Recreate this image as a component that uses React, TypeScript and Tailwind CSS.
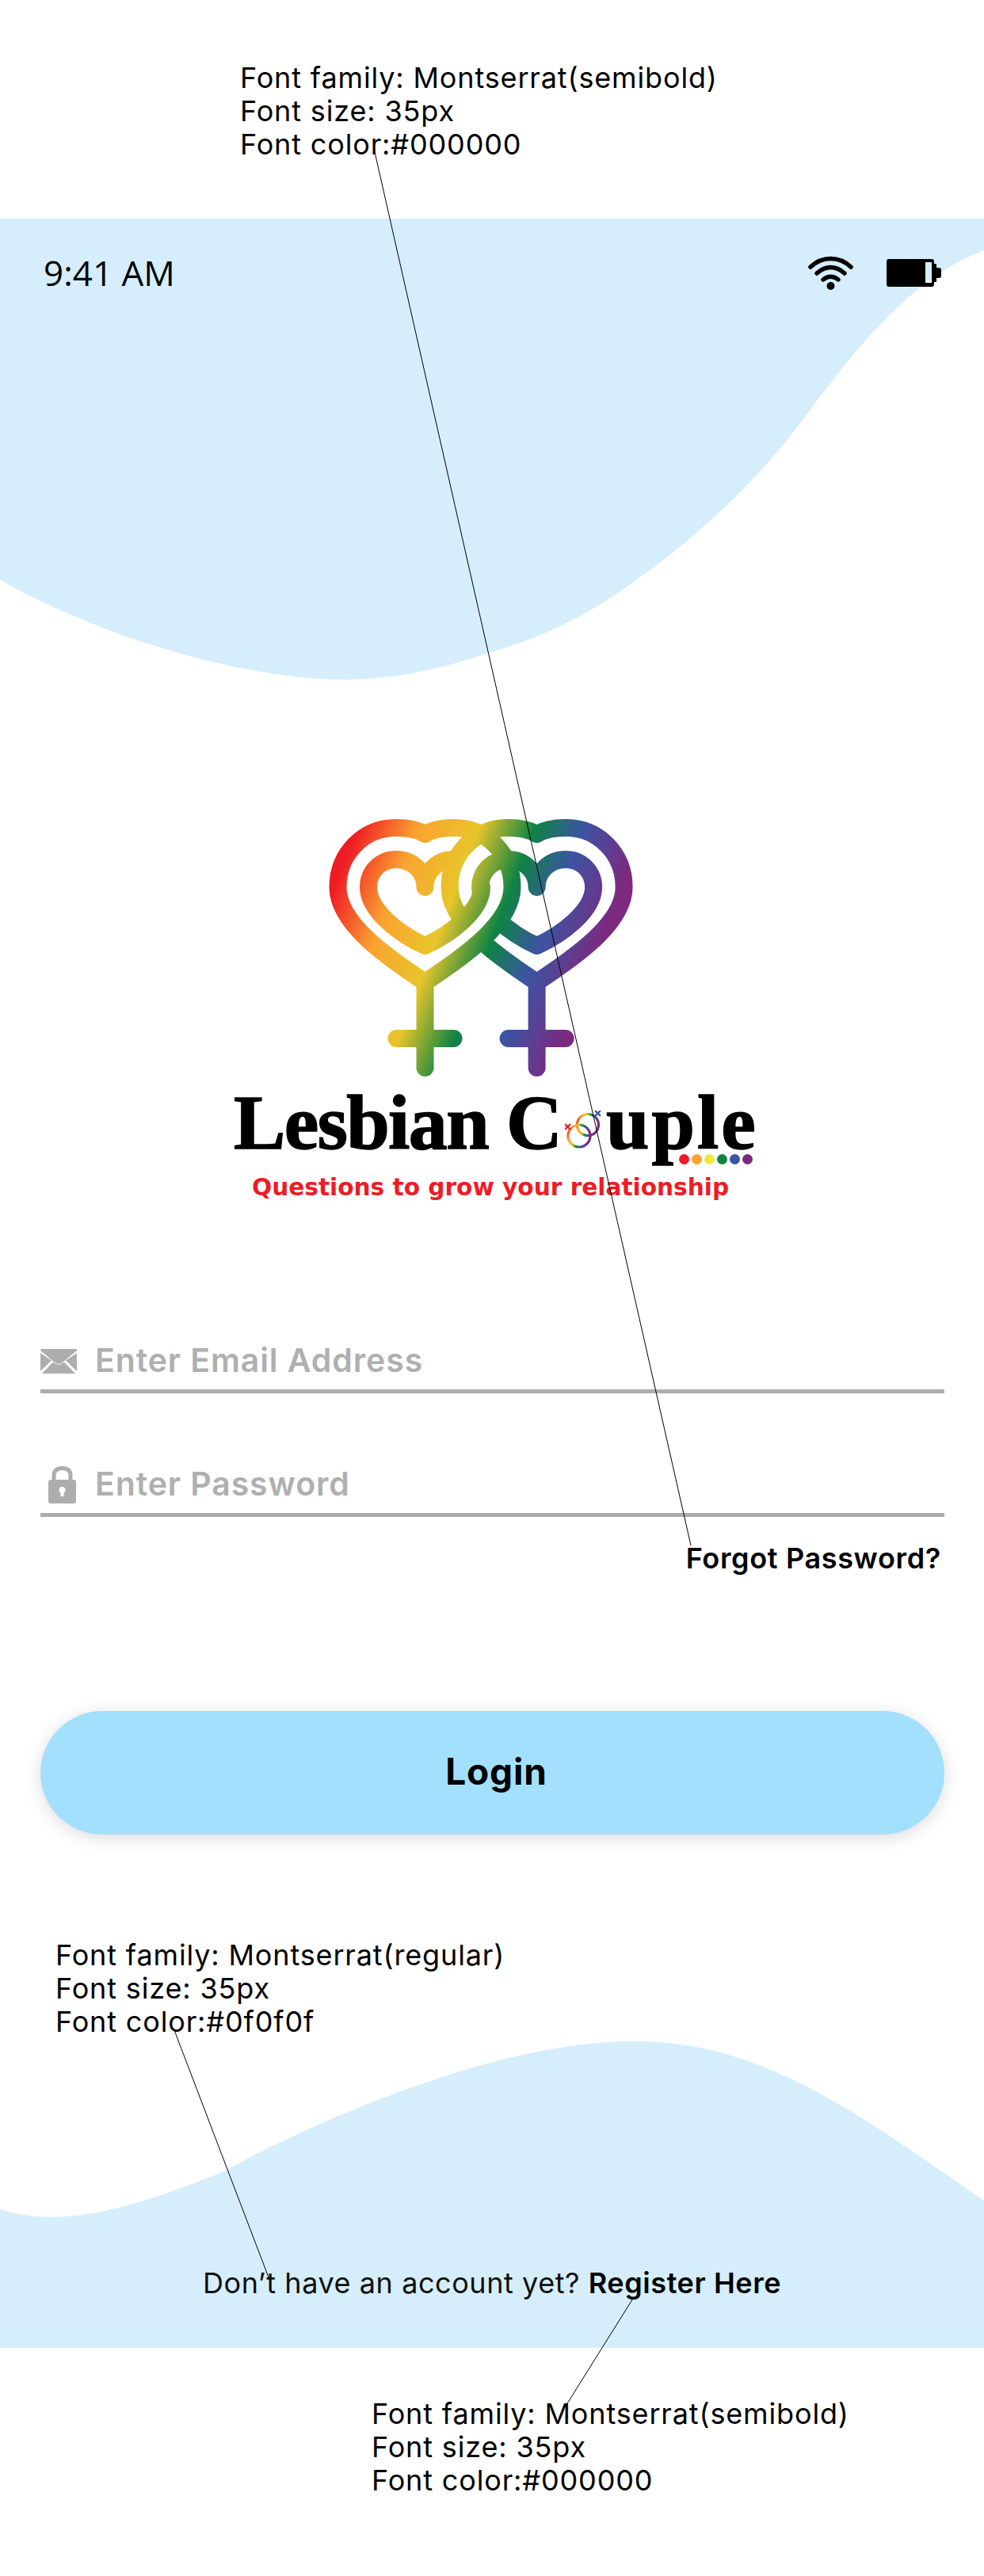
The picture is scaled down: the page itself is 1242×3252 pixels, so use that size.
import React from "react";

const note = "font-['Inter',sans-serif] text-[36px] leading-[42px] tracking-[0.85px]";
const stops: [string, string][] = [
  ["0", "#ee1c25"],
  ["0.21", "#faa330"],
  ["0.42", "#e8c52a"],
  ["0.61", "#0f8443"],
  ["0.78", "#3b54a3"],
  ["1", "#7f287f"],
];

const Note: React.FC<{ lines: string[]; className?: string }> = ({ lines, className }) => (
  <div className={`${note} text-black ${className ?? ""}`}>
    {lines.map((l) => (
      <div key={l}>{l}</div>
    ))}
  </div>
);

const outerHeart = (c: number) =>
  `M${c} 53C${c - 10} 47 ${c - 22} 45 ${c - 36.5} 45C${c - 78} 45 ${c - 110} 78 ${c - 110} 120C${c - 110} 165 ${c - 50} 207 ${c} 240C${c + 50} 207 ${c + 110} 165 ${c + 110} 120C${c + 110} 78 ${c + 78} 45 ${c + 36.5} 45C${c + 22} 45 ${c + 10} 47 ${c} 53`;

const HeartsLogo = () => {
  const L = 266.5;
  const R = 407.6;
  const props = { fill: "none", stroke: "url(#rainbow)", strokeWidth: 22, strokeLinecap: "round" as const, strokeLinejoin: "round" as const };
  return (
    <svg width="700" height="380" viewBox="0 0 700 380" className="block">
      <defs>
        <linearGradient id="rainbow" gradientUnits="userSpaceOnUse" x1="197" y1="0" x2="518.6" y2="122">
          {stops.map(([o, c]) => (
            <stop key={o} offset={o} stopColor={c} />
          ))}
        </linearGradient>
      </defs>
      {/* right heart goes underneath */}
      <path {...props} d={outerHeart(R)} strokeLinejoin="miter" />
      <path
        {...props}
        d={`M${R} 120C${R} 100 ${R - 16} 85 ${R - 36.5} 85C${R - 56} 85 ${R - 71.5} 100 ${R - 71.5} 120C${R - 71.5} 150 ${R - 31} 180 ${R} 194C${R + 31} 180 ${R + 71.5} 150 ${R + 71.5} 120C${R + 71.5} 100 ${R + 56} 85 ${R + 36.5} 85C${R + 16} 85 ${R} 100 ${R} 120`}
      />
      {/* gap between the two left strokes hides the right heart */}
      <path d={`M${L + 91} 122C${L + 91} 160 ${L + 40} 195 ${L} 217`} fill="none" stroke="#fff" strokeWidth="19" />
      <path {...props} d={outerHeart(L)} strokeLinejoin="miter" />
      <path
        {...props}
        d={`M${L + 36} 85C${L + 16} 85 ${L} 100 ${L} 120C${L} 100 ${L - 16} 85 ${L - 36.5} 85C${L - 56} 85 ${L - 71.5} 100 ${L - 71.5} 120C${L - 71.5} 150 ${L - 31} 180 ${L} 194C${L + 31} 180 ${L + 71.5} 150 ${L + 71.5} 120`}
      />
      <path d={`M${L} 240V348M${L - 36} 311H${L + 36}`} {...props} />
      <path d={`M${R} 240V348M${R - 36} 311H${R + 36}`} {...props} />
    </svg>
  );
};

const RingsO = () => (
  <svg width="47" height="48" viewBox="0 0 47 48" className="inline-block align-baseline mx-[5px]">
    <defs>
      <linearGradient id="ringsGrad" x1="0" y1="0" x2="1" y2="0.3">
        {stops.map(([o, c]) => (
          <stop key={o} offset={o} stopColor={c} />
        ))}
      </linearGradient>
    </defs>
    <g fill="none" stroke="url(#ringsGrad)" strokeWidth="3.2">
      <circle cx="29" cy="18" r="13.5" />
      <circle cx="18" cy="32" r="14" />
    </g>
    <path d="M0 17l7 7M7 17l-7 7" stroke="#ee1c25" strokeWidth="2.4" />
    <path d="M38 0l7 7M45 0l-7 7" stroke="#3b54a3" strokeWidth="2.4" />
  </svg>
);

export default function App() {
  return (
    <div className="relative w-[1242px] h-[3252px] bg-white overflow-hidden flex flex-col">
      <div className="h-[276px] pt-[77px] pl-[303px]">
        <Note lines={["Font family: Montserrat(semibold)", "Font size: 35px", "Font color:#000000"]} />
      </div>

      <div className="relative h-[2688px] shrink-0">
        {/* background waves */}
        <svg className="absolute left-0 top-0" width="1242" height="600" viewBox="0 0 1242 600">
          <path
            d="M0 0H1242V40C1160 70 1090 150 1020 245C950 340 870 410 792 464C737 504 680 530 618 548C558 568 500 582 436 582C310 582 130 530 0 456Z"
            fill="#d6eefb"
          />
        </svg>
        <svg className="absolute left-0 top-[2300px]" width="1242" height="388" viewBox="0 0 1242 388">
          <path
            d="M0 213C70 235 150 220 285 164C420 90 640 0 800 1C960 0 1080 90 1242 202V388H0Z"
            fill="#d6eefb"
          />
        </svg>

        <div className="relative flex flex-col">
          <div className="h-[136px] pl-[55px] pr-[54px] flex items-center justify-between">
            <span className="font-['Open_Sans',sans-serif] text-[44px] text-black">9:41 AM</span>
            <div className="flex items-center gap-[42px]">
              <svg width="57" height="43" viewBox="0 0 57 43">
                <g fill="none" stroke="#000" strokeWidth="5.5" strokeLinecap="round">
                  <path d="M3 14C18 0 39 0 54 14" />
                  <path d="M11 22C22 12 35 12 46 22" />
                  <path d="M19 30C25 25 32 25 38 30" />
                </g>
                <circle cx="28.5" cy="38" r="5" fill="#000" />
              </svg>
              <svg width="69" height="35" viewBox="0 0 69 35">
                <path
                  fill="#000"
                  fillRule="evenodd"
                  d="M3 0H57Q60 0 60 3V6H63V11H66Q69 11 69 14V21Q69 24 66 24H63V29H60V32Q60 35 57 35H3Q0 35 0 32V3Q0 0 3 0ZM49 4V30H57V4Z"
                />
              </svg>
            </div>
          </div>

          <div className="mt-[588px] ml-[270px]">
            <HeartsLogo />
          </div>
          <div className="relative ml-[295px] w-fit h-[86px] mt-[-6px] font-['Liberation_Serif',serif] font-bold text-[98px] leading-[86px] text-black whitespace-nowrap [-webkit-text-stroke:1.5px_#000]">
            <span className="tracking-[-1.6px]">Lesbian C</span>
            <RingsO />
            <span className="tracking-[3px]">uple</span>
            <div className="absolute left-[562px] top-[83px] flex gap-[3px]">
              {["bg-[#ee1c25]", "bg-[#faa330]", "bg-[#f2e73a]", "bg-[#0f8443]", "bg-[#3b54a3]", "bg-[#7f287f]"].map((c) => (
                <span key={c} className={`w-[13px] h-[13px] rounded-full ${c}`} />
              ))}
            </div>
          </div>
          <div className="mt-[20px] ml-[318px] font-['DejaVu_Sans',sans-serif] font-bold text-[29.6px] leading-[38px] text-[#ee1c25] whitespace-nowrap">
            Questions to grow your relationship
          </div>

          <div className="mt-[164px] mx-[51px] w-[1141px] h-[77px] border-b-[5px] border-[#aeadae] flex items-center font-['Inter',sans-serif] font-semibold text-[41px] tracking-[0.9px] text-[#b0afb0]">
            <svg width="46" height="31" viewBox="0 0 46 31" className="mr-[23px]">
              <path fill="#aeadae" d="M0 2L18 17Q23 21 28 17L46 2V0H1ZM0 5V28L14 14.5ZM46 5V28L32 14.5ZM2 31H44L30 16.5Q23 23 16 16.5Z" />
            </svg>
            Enter Email Address
          </div>
          <div className="mt-[79px] mx-[51px] w-[1141px] h-[77px] border-b-[5px] border-[#aeadae] flex items-center font-['Inter',sans-serif] font-semibold text-[41px] tracking-[0.9px] text-[#b0afb0]">
            <svg width="35" height="47" viewBox="0 0 35 47" className="ml-[10px] mr-[24px]">
              <path fill="none" stroke="#aeadae" strokeWidth="5" d="M7 20V12C7 5.5 11 2.5 17.5 2.5S28 5.5 28 12V20" />
              <path
                fill="#aeadae"
                fillRule="evenodd"
                d="M3 17H32Q35 17 35 20V44Q35 47 32 47H3Q0 47 0 44V20Q0 17 3 17ZM17.5 26A4 4 0 0 0 15.5 33.5V38H19.5V33.5A4 4 0 0 0 17.5 26Z"
              />
            </svg>
            Enter Password
          </div>
          <div className="mt-[30px] mr-[54px] text-right font-['Inter',sans-serif] font-semibold text-[36px] tracking-[0.65px] leading-[44px] text-black">
            Forgot Password?
          </div>

          <button className="mt-[171px] mx-[51px] w-[1141px] h-[156px] pl-[10px] pb-[4px] rounded-[78px] bg-[#a3e0fe] shadow-[0_4px_22px_rgba(0,0,0,0.14)] font-['Inter',sans-serif] font-bold text-[46px] tracking-[0.8px] text-black">
            Login
          </button>

          <Note className="mt-[131px] ml-[70px]" lines={["Font family: Montserrat(regular)", "Font size: 35px", "Font color:#0f0f0f"]} />

          <div className="mt-[288px] ml-[256px] font-['Inter',sans-serif] text-[36px] tracking-[0.57px] leading-[42px] text-[#0f0f0f] whitespace-nowrap">
            Don’t have an account yet? <span className="font-semibold text-black">Register Here</span>
          </div>
        </div>
      </div>

      <div className="pt-[62px] pl-[469px]">
        <Note lines={["Font family: Montserrat(semibold)", "Font size: 35px", "Font color:#000000"]} />
      </div>

      {/* annotation leader lines */}
      <svg className="absolute left-0 top-0 pointer-events-none" width="1242" height="3252" viewBox="0 0 1242 3252">
        <g stroke="#000" strokeWidth="1" fill="none">
          <path d="M473 192L872 1951" />
          <path d="M220 2563L339 2875" />
          <path d="M800 2900L713 3039" />
        </g>
      </svg>
    </div>
  );
}
